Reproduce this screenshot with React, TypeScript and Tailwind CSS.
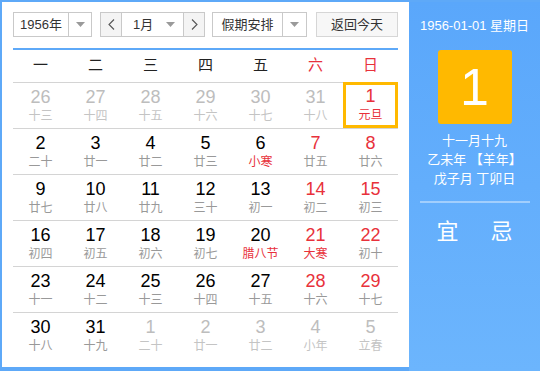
import React from "react";

type Day = { n: number; l: string; dim?: boolean; red?: boolean; lred?: boolean; today?: boolean };

const rows: Day[][] = [
  [
    { n: 26, l: "十三", dim: true },
    { n: 27, l: "十四", dim: true },
    { n: 28, l: "十五", dim: true },
    { n: 29, l: "十六", dim: true },
    { n: 30, l: "十七", dim: true },
    { n: 31, l: "十八", dim: true },
    { n: 1, l: "元旦", red: true, lred: true, today: true },
  ],
  [
    { n: 2, l: "二十" },
    { n: 3, l: "廿一" },
    { n: 4, l: "廿二" },
    { n: 5, l: "廿三" },
    { n: 6, l: "小寒", lred: true },
    { n: 7, l: "廿五", red: true },
    { n: 8, l: "廿六", red: true },
  ],
  [
    { n: 9, l: "廿七" },
    { n: 10, l: "廿八" },
    { n: 11, l: "廿九" },
    { n: 12, l: "三十" },
    { n: 13, l: "初一" },
    { n: 14, l: "初二", red: true },
    { n: 15, l: "初三", red: true },
  ],
  [
    { n: 16, l: "初四" },
    { n: 17, l: "初五" },
    { n: 18, l: "初六" },
    { n: 19, l: "初七" },
    { n: 20, l: "腊八节", lred: true },
    { n: 21, l: "大寒", red: true, lred: true },
    { n: 22, l: "初十", red: true },
  ],
  [
    { n: 23, l: "十一" },
    { n: 24, l: "十二" },
    { n: 25, l: "十三" },
    { n: 26, l: "十四" },
    { n: 27, l: "十五" },
    { n: 28, l: "十六", red: true },
    { n: 29, l: "十七", red: true },
  ],
  [
    { n: 30, l: "十八" },
    { n: 31, l: "十九" },
    { n: 1, l: "二十", dim: true },
    { n: 2, l: "廿一", dim: true },
    { n: 3, l: "廿二", dim: true },
    { n: 4, l: "小年", dim: true },
    { n: 5, l: "立春", dim: true },
  ],
];

const weekdays = ["一", "二", "三", "四", "五", "六", "日"];

const Caret = () => (
  <svg width="9" height="5" viewBox="0 0 9 5">
    <path d="M0 0 L9 0 L4.5 5 Z" fill="#9a9a9a" />
  </svg>
);

const font = { fontFamily: '"Liberation Sans", "Noto Sans CJK SC", sans-serif' };

export default function App() {
  return (
    <div className="w-[540px] h-[371px] bg-[#5ea9f8] pt-[2px] pl-[2px] pb-[4px] flex" style={font}>
      <div className="w-[407px] h-full bg-white px-[11px] pt-[10px] flex flex-col">
        {/* controls */}
        <div className="flex items-center h-[25px] text-[13px] text-[#333]">
          <div className="w-[79px] h-[25px] border border-[#c9c9c9] flex">
            <div className="w-[55px] flex items-center justify-center border-r border-[#c9c9c9]">1956年</div>
            <div className="flex-1 flex items-center justify-center">
              <Caret />
            </div>
          </div>
          <div className="ml-[8px] w-[105px] h-[25px] border border-[#c9c9c9] flex">
            <div className="w-[21px] bg-[#f4f4f4] border-r border-[#c9c9c9] flex items-center justify-center">
              <svg width="7" height="11" viewBox="0 0 7 11">
                <path d="M6 0.5 L1 5.5 L6 10.5" fill="none" stroke="#555" strokeWidth="1.1" />
              </svg>
            </div>
            <div className="w-[61px] flex items-center pl-[11px] pr-[8px] justify-between">
              <span>1月</span>
              <Caret />
            </div>
            <div className="flex-1 bg-[#f4f4f4] border-l border-[#c9c9c9] flex items-center justify-center">
              <svg width="7" height="11" viewBox="0 0 7 11">
                <path d="M1 0.5 L6 5.5 L1 10.5" fill="none" stroke="#555" strokeWidth="1.1" />
              </svg>
            </div>
          </div>
          <div className="ml-[7px] w-[95px] h-[25px] border border-[#c9c9c9] flex">
            <div className="w-[70px] flex items-center justify-center border-r border-[#c9c9c9]">假期安排</div>
            <div className="flex-1 flex items-center justify-center">
              <Caret />
            </div>
          </div>
          <div className="ml-[9px] w-[82px] h-[25px] border border-[#d6d6d6] bg-[#f7f7f7] flex items-center justify-center">
            返回今天
          </div>
        </div>
        {/* blue line */}
        <div className="mt-[11px] h-[1.5px] bg-[#5ea9f8]" />
        {/* weekday header */}
        <div className="grid grid-cols-7 h-[33px] items-center text-[15px] border-b border-[#d4d4d4]">
          {weekdays.map((w, i) => (
            <div key={w} className={`text-center ${i >= 5 ? "text-[#e8313b]" : "text-[#222]"}`}>
              {w}
            </div>
          ))}
        </div>
        {/* day rows */}
        {rows.map((row, ri) => (
          <div
            key={ri}
            className={`grid grid-cols-7 h-[46px] ${ri < rows.length - 1 ? "border-b border-[#d4d4d4]" : ""}`}
          >
            {row.map((d, ci) => (
              <div
                key={ci}
                className={`flex flex-col items-center justify-center ${
                  d.today ? "border-[3px] border-[#ffb900] -mt-[1px]" : ""
                }`}
              >
                <div
                  className={`text-[18px] leading-[20px] ${
                    d.dim ? "text-[#bdbdbd]" : d.red ? "text-[#e8313b]" : "text-black"
                  }`}
                >
                  {d.n}
                </div>
                <div
                  className={`text-[12px] leading-[16px] mt-[1px] ${
                    d.lred ? "text-[#e8313b]" : d.dim ? "text-[#c4c4c4]" : "text-[#999]"
                  }`}
                >
                  {d.l}
                </div>
              </div>
            ))}
          </div>
        ))}
      </div>
      <div className="flex-1 h-[calc(100%+4px)] bg-gradient-to-b from-[#5aa7fb] to-[#6cb5fd] flex flex-col items-center text-white">
        <div className="mt-[15px] text-[13px] leading-[18px]">1956-01-01 星期日</div>
        <div className="mt-[15px] w-[74px] h-[74px] rounded-[3px] bg-[#ffb900] flex items-center justify-center text-[52px] leading-none">
          1
        </div>
        <div className="mt-[7px] text-[13px] leading-[19px] text-center">
          <div>十一月十九</div>
          <div>乙未年 【羊年】</div>
          <div>戊子月 丁卯日</div>
        </div>
        <div className="mt-[13px] w-[110px] h-[2px] bg-white/40" />
        <div className="mt-[14px] w-[110px] flex justify-between px-[17px] text-[22px] leading-[30px]">
          <span>宜</span>
          <span>忌</span>
        </div>
      </div>
    </div>
  );
}
